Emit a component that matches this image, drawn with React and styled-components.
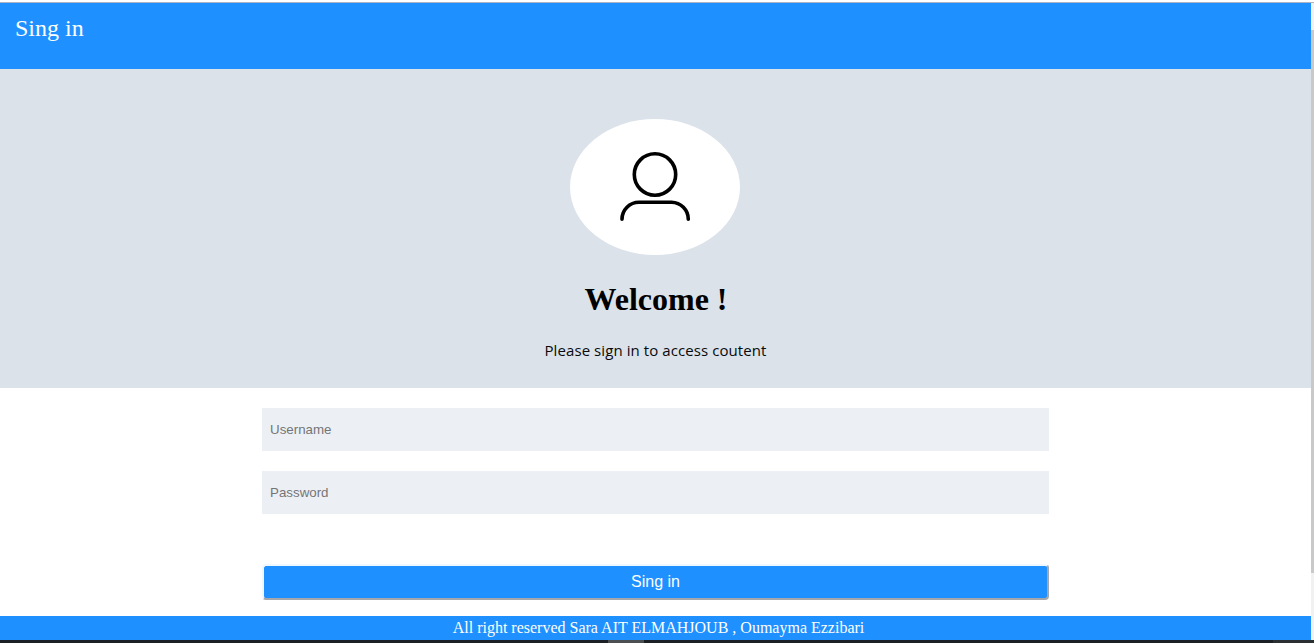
import React from "react";
import styled, { createGlobalStyle } from "styled-components";

const GlobalStyle = createGlobalStyle`
  * { box-sizing: border-box; }
  body { margin: 0; background: #fff; overflow: hidden; font-family: "Liberation Serif", serif; }
`;

const Screen = styled.div`
  display: flex;
  flex-direction: column;
  width: 1314px;
  height: 643px;
`;

const TopEdge = styled.div`
  height: 3px;
  flex: none;
  border-bottom: 1px solid #adb3c2;
`;

const Viewport = styled.div`
  display: flex;
  height: 637px;
`;

const Page = styled.div`
  display: flex;
  flex-direction: column;
  width: 1311px;
`;

const ScrollTrack = styled.div`
  width: 3px;
  padding-top: 27px;
  background: #f1f1f1;
`;

const ScrollThumb = styled.div`
  height: 543px;
  background: #c9c9c9;
`;

const Header = styled.header`
  height: 66px;
  padding: 11px 15px;
  background: #1e90ff;
  color: #fff;
  font-size: 24px;
  line-height: 28px;
`;

const Hero = styled.section`
  display: flex;
  flex-direction: column;
  align-items: center;
  height: 319px;
  padding-top: 50px;
  background: #dbe2ea;
`;

const Avatar = styled.div`
  width: 170px;
  height: 136px;
  margin-right: 1px;
  border-radius: 50%;
  background: #fff;

  svg { display: block; }
`;

const Title = styled.h1`
  margin: 26px 0 0;
  padding-left: 1px;
  font-size: 32px;
  line-height: 36px;
`;

const Subtitle = styled.p`
  margin: 22px 0 0;
  font-family: "Open Sans", "Noto Sans", sans-serif;
  font-size: 15px;
  line-height: 22px;
  letter-spacing: 0.08px;
  white-space: nowrap;
  color: #0a0a0a;
`;

const Form = styled.form`
  display: flex;
  flex-direction: column;
  gap: 20px;
  width: 787px;
  height: 228px;
  margin-left: 262px;
  padding-top: 20px;
`;

const Field = styled.input`
  width: 100%;
  height: 43px;
  padding: 0 8px;
  border: 0;
  border-radius: 0;
  background: #ecf0f5;
  font-family: "Liberation Sans", Arial, sans-serif;
  font-size: 13.333px;

  &::placeholder { color: #757575; }
`;

const SubmitButton = styled.button`
  height: 36px;
  margin-top: 30px;
  padding: 0;
  border: 2px solid;
  border-color: #f0f8ff #a5a7aa #a5a7aa #f0f8ff;
  border-radius: 4px;
  background: #1e90ff;
  color: #fff;
  font-family: "Liberation Sans", Arial, sans-serif;
  font-size: 16px;
  line-height: 32px;
`;

const Footer = styled.footer`
  height: 24px;
  padding-left: 6px;
  background: #1e90ff;
  color: #fff;
  font-size: 16px;
  line-height: 24px;
  text-align: center;
`;

const Taskbar = styled.div`
  display: flex;
  justify-content: space-between;
  height: 3px;
  padding-left: 608px;
  background: #1b2026;
`;

const TaskbarItem = styled.div`
  width: ${({ $width }) => $width}px;
  background: ${({ $color }) => $color};
`;

const UserIcon = () => (
  <svg width="170" height="136" viewBox="0 0 170 136" fill="none" stroke="#000" strokeWidth="3.6" strokeLinecap="round">
    <circle cx="85" cy="55.5" r="20.7" />
    <path d="M52 100.200A17 17 0 0 1 69 83.200H101.500A17 17 0 0 1 118.300 100.200" />
  </svg>
);

export default function App() {
  return (
    <Screen>
      <GlobalStyle />
      <TopEdge />
      <Viewport>
        <Page>
          <Header>Sing in</Header>
          <Hero>
            <Avatar><UserIcon /></Avatar>
            <Title>Welcome !</Title>
            <Subtitle>Please sign in to access coutent</Subtitle>
          </Hero>
          <Form>
            <Field type="text" placeholder="Username" />
            <Field type="password" placeholder="Password" />
            <SubmitButton type="button">Sing in</SubmitButton>
          </Form>
          <Footer>All right reserved Sara AIT ELMAHJOUB , Oumayma Ezzibari</Footer>
        </Page>
        <ScrollTrack><ScrollThumb /></ScrollTrack>
      </Viewport>
      <Taskbar>
        <TaskbarItem $width={36} $color="#4b4f52" />
        <TaskbarItem $width={41} $color="#2a3032" />
      </Taskbar>
    </Screen>
  );
}
